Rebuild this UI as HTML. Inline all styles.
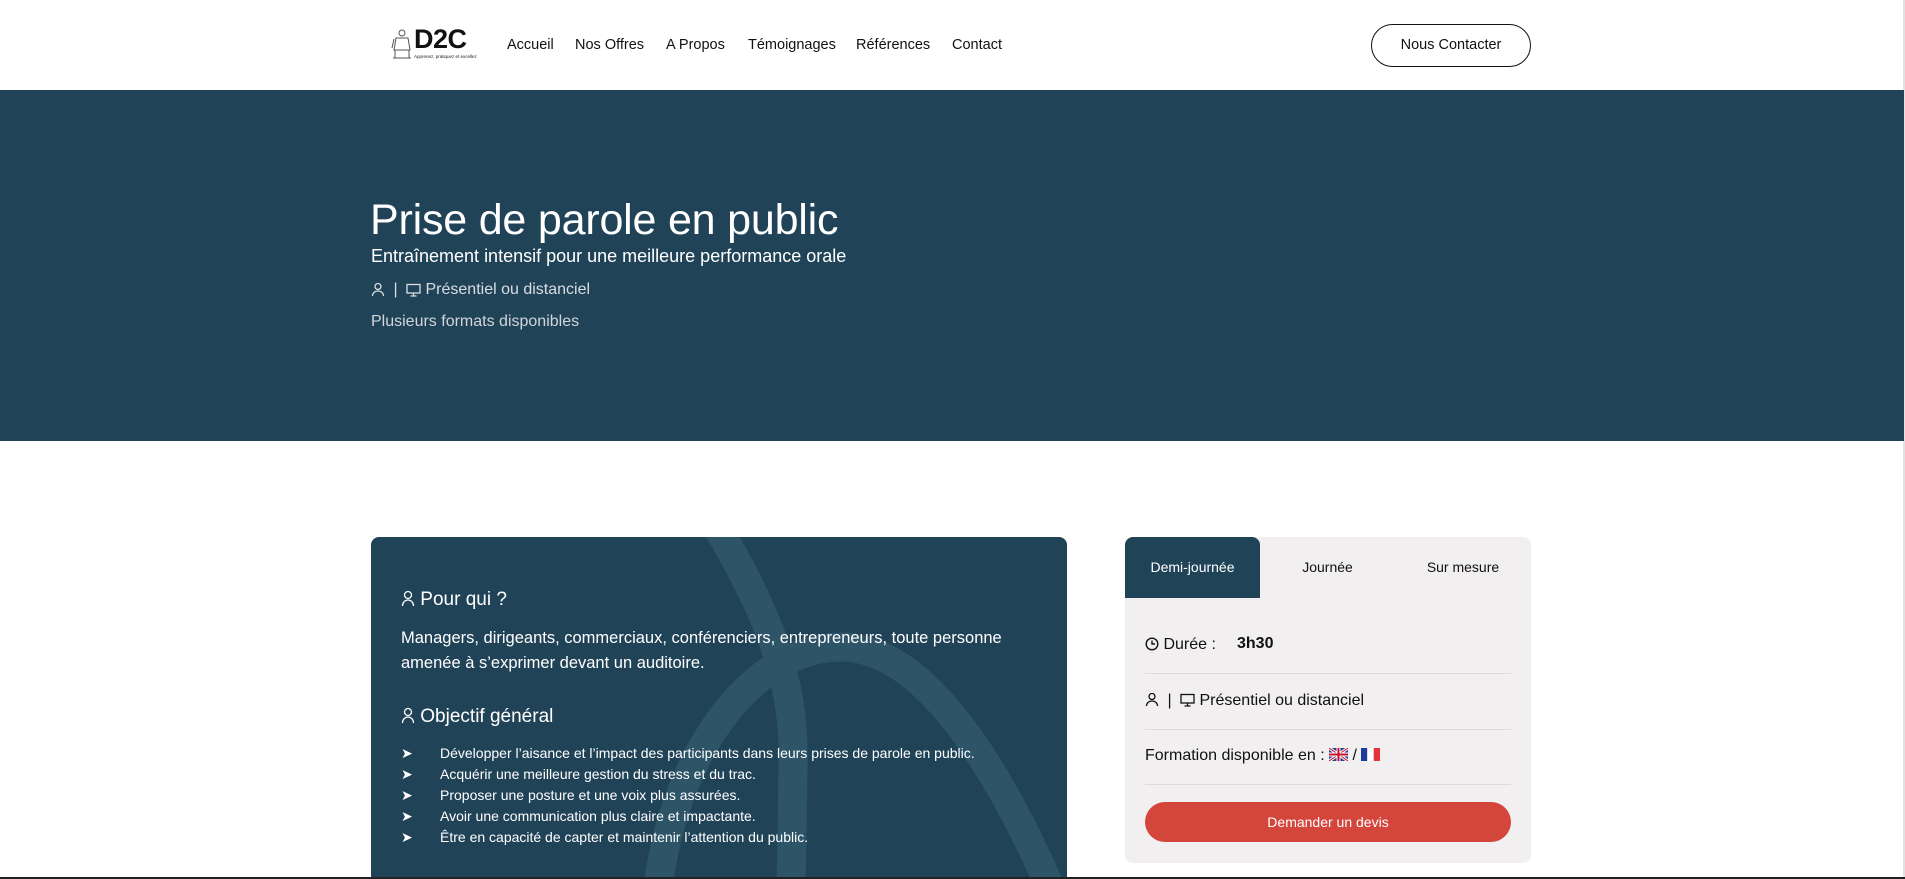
<!DOCTYPE html>
<html><head><meta charset="utf-8">
<style>
*{margin:0;padding:0;box-sizing:border-box}
html,body{width:1905px;height:879px;overflow:hidden;background:#fff;font-family:"Liberation Sans",Arial,sans-serif;color:#111}
.abs{position:absolute}
.nav a{position:absolute;top:37px;font-size:14.5px;color:#111;text-decoration:none;white-space:nowrap}
.hero{position:absolute;left:0;top:90px;width:1904px;height:351px;background:#214357}
.ic{display:inline-block;vertical-align:middle}
.bul{position:absolute;left:401px;font-size:14px;color:#fff;white-space:nowrap}
.bul span{position:absolute;left:39px;top:0}
.sep{position:absolute;left:1145px;width:366px;height:1px;background:#dcdadb}
</style></head><body>
<div class="abs" style="left:391px;top:27px;width:22px;height:33px">
<svg width="22" height="33" viewBox="0 0 22 33"><g fill="none" stroke="#555" stroke-width="1"><circle cx="11" cy="6" r="3"/><path d="M5 11h12l2 12H3z M4 23h14v8H4z M2 31h18 M3 12l-2 9"/></g></svg></div>
<div class="abs" style="left:414px;top:24px;font-size:27px;font-weight:bold;letter-spacing:-0.5px;color:#111">D2C</div>
<div class="abs" style="left:414px;top:54px;font-size:4.5px;color:#222;white-space:nowrap">Apprenez, pratiquez et excellez</div>
<div class="nav">
<a style="left:507px">Accueil</a>
<a style="left:575px">Nos Offres</a>
<a style="left:666px">A Propos</a>
<a style="left:748px">Témoignages</a>
<a style="left:856px">Références</a>
<a style="left:952px">Contact</a>
</div>
<div class="abs" style="left:1371px;top:24px;width:160px;height:43px;border:1.3px solid #111;border-radius:22px;font-size:14.5px;text-align:center;line-height:40px">Nous Contacter</div>
<div class="abs" style="left:1903px;top:0;width:2px;height:879px;background:#e2e2e2"></div>
<div class="hero"></div>
<div class="abs" style="left:370px;top:196px;font-size:43px;color:#fff;letter-spacing:-0.2px;white-space:nowrap">Prise de parole en public</div>
<div class="abs" style="left:371px;top:246px;font-size:18px;color:#fff;white-space:nowrap">Entraînement intensif pour une meilleure performance orale</div>
<div class="abs" style="left:371px;top:281px;font-size:16px;color:#d8dde1;white-space:nowrap">
<svg class="ic" width="14" height="15" viewBox="0 0 14 15"><g fill="none" stroke="#d8dde1" stroke-width="1.3"><circle cx="7" cy="4.5" r="3"/><path d="M1.5 14c0-3 2.5-5 5.5-5s5.5 2 5.5 5"/></g></svg>
<span style="margin:0 4px">|</span>
<svg class="ic" width="15" height="14" viewBox="0 0 15 14"><g fill="none" stroke="#d8dde1" stroke-width="1.3"><rect x="1" y="1.5" width="13" height="8.5"/><path d="M7.5 10v3M4.5 13h6"/></g></svg>
Présentiel ou distanciel</div>
<div class="abs" style="left:371px;top:313px;font-size:16px;color:#d0d6da">Plusieurs formats disponibles</div>
<div class="abs" style="left:371px;top:537px;width:696px;height:340px;background:#214357;border-radius:8px 8px 0 0;overflow:hidden">
<svg width="696" height="340" class="abs" style="left:0;top:0"><g fill="none" stroke="#2e5468" stroke-width="29"><path d="M346 -10 C400 80 425 150 422 230 L420 360"/><path d="M286 360 C300 220 380 110 470 110 C560 110 640 250 700 400"/></g></svg>
</div>
<div class="abs" style="left:401px;top:589px;font-size:19px;color:#fff;white-space:nowrap">
<svg class="ic" width="14" height="17" viewBox="0 0 14 17" style="margin-top:-3px"><g fill="none" stroke="#fff" stroke-width="1.3"><circle cx="7" cy="5" r="3.5"/><path d="M1.5 16c0-3.5 2.5-6 5.5-6s5.5 2.5 5.5 6"/></g></svg> Pour qui ?</div>
<div class="abs" style="left:401px;top:626px;width:640px;font-size:16.5px;line-height:25px;color:#fff">Managers, dirigeants, commerciaux, conférenciers, entrepreneurs, toute personne amenée à s’exprimer devant un auditoire.</div>
<div class="abs" style="left:401px;top:706px;font-size:19px;color:#fff;white-space:nowrap">
<svg class="ic" width="14" height="17" viewBox="0 0 14 17" style="margin-top:-3px"><g fill="none" stroke="#fff" stroke-width="1.3"><circle cx="7" cy="5" r="3.5"/><path d="M1.5 16c0-3.5 2.5-6 5.5-6s5.5 2.5 5.5 6"/></g></svg> Objectif général</div>
<div class="bul" style="top:745px">➤<span>Développer l’aisance et l’impact des participants dans leurs prises de parole en public.</span></div>
<div class="bul" style="top:766px">➤<span>Acquérir une meilleure gestion du stress et du trac.</span></div>
<div class="bul" style="top:787px">➤<span>Proposer une posture et une voix plus assurées.</span></div>
<div class="bul" style="top:808px">➤<span>Avoir une communication plus claire et impactante.</span></div>
<div class="bul" style="top:829px">➤<span>Être en capacité de capter et maintenir l’attention du public.</span></div>
<div class="abs" style="left:1125px;top:537px;width:406px;height:326px;background:#f1eff0;border-radius:8px"></div>
<div class="abs" style="left:1125px;top:537px;width:135px;height:61px;background:#214357;border-radius:8px 8px 0 0;color:#fff;font-size:14px;text-align:center;line-height:60px">Demi-journée</div>
<div class="abs" style="left:1260px;top:537px;width:135px;font-size:14px;text-align:center;line-height:60px">Journée</div>
<div class="abs" style="left:1395px;top:537px;width:136px;font-size:14px;text-align:center;line-height:60px">Sur mesure</div>
<div class="abs" style="left:1145px;top:636px;font-size:16px;white-space:nowrap">
<svg class="ic" width="14" height="14" viewBox="0 0 14 14" style="margin-top:-2px"><g fill="none" stroke="#111" stroke-width="1.4"><circle cx="7" cy="7" r="5.8"/><path d="M7 3.5V7h3"/></g></svg> Durée :</div>
<div class="abs" style="left:1237px;top:635px;font-size:16px;font-weight:bold">3h30</div>
<div class="sep" style="top:673px"></div>
<div class="abs" style="left:1145px;top:692px;font-size:16px;white-space:nowrap">
<svg class="ic" width="14" height="15" viewBox="0 0 14 15" style="margin-top:-2px"><g fill="none" stroke="#111" stroke-width="1.3"><circle cx="7" cy="4.5" r="3"/><path d="M1.5 14c0-3 2.5-5 5.5-5s5.5 2 5.5 5"/></g></svg>
<span style="margin:0 4px">|</span>
<svg class="ic" width="15" height="14" viewBox="0 0 15 14" style="margin-top:-2px"><g fill="none" stroke="#111" stroke-width="1.3"><rect x="1" y="1.5" width="13" height="8.5"/><path d="M7.5 10v3M4.5 13h6"/></g></svg>
Présentiel ou distanciel</div>
<div class="sep" style="top:729px"></div>
<div class="abs" style="left:1145px;top:747px;font-size:16px;white-space:nowrap">Formation disponible en :
<svg class="ic" width="19" height="13" viewBox="0 0 19 13" style="margin-top:-3px"><rect width="19" height="13" fill="#2a3d8f"/><path d="M0 0L19 13M19 0L0 13" stroke="#fff" stroke-width="3"/><path d="M0 0L19 13M19 0L0 13" stroke="#c8102e" stroke-width="1"/><path d="M9.5 0v13M0 6.5h19" stroke="#fff" stroke-width="4"/><path d="M9.5 0v13M0 6.5h19" stroke="#c8102e" stroke-width="2"/></svg>
/ <svg class="ic" width="19" height="13" viewBox="0 0 19 13" style="margin-top:-3px"><rect width="6.3" height="13" fill="#1f3b9b"/><rect x="6.3" width="6.4" height="13" fill="#fff"/><rect x="12.7" width="6.3" height="13" fill="#e1343c"/></svg></div>
<div class="sep" style="top:784px"></div>
<div class="abs" style="left:1145px;top:802px;width:366px;height:40px;background:#d4453b;border-radius:20px;color:#fff;font-size:14px;text-align:center;line-height:40px">Demander un devis</div>
<div class="abs" style="left:0;top:877px;width:1905px;height:2px;background:#222"></div>
</body></html>
